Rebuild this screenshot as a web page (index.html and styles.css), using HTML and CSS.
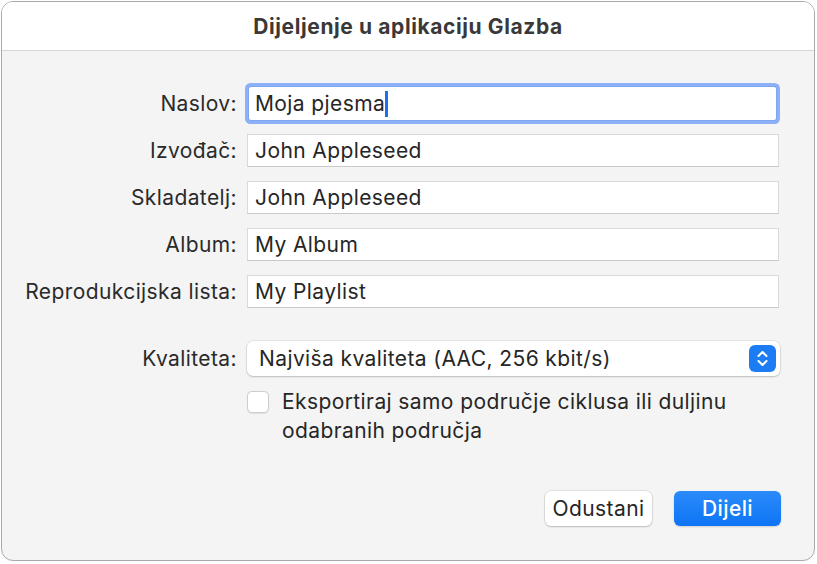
FILE: index.html
```html
<!DOCTYPE html>
<html lang="hr">
<head>
<meta charset="utf-8">
<title>Dijeljenje u aplikaciju Glazba</title>
<link rel="stylesheet" href="styles.css">
</head>
<body>
<div class="window">
  <div class="titlebar">Dijeljenje u aplikaciju Glazba</div>
  <div class="content">
    <div class="form">
      <label class="label">Naslov:</label>
      <div class="field focused"><span>Moja pjesma</span><span class="caret"></span></div>
      <label class="label">Izvođač:</label>
      <div class="field"><span>John Appleseed</span></div>
      <label class="label">Skladatelj:</label>
      <div class="field"><span>John Appleseed</span></div>
      <label class="label">Album:</label>
      <div class="field"><span>My Album</span></div>
      <label class="label">Reprodukcijska lista:</label>
      <div class="field"><span>My Playlist</span></div>
    </div>
    <div class="options">
      <label class="label">Kvaliteta:</label>
      <div class="popup">
        <span>Najviša kvaliteta (AAC, 256 kbit/s)</span>
        <span class="stepper">
          <svg width="27" height="27" viewBox="0 0 27 27">
            <rect x="0" y="0" width="27" height="27" rx="6" fill="#1c7cf4"/>
            <path d="M9.5 11 L13.5 7 L17.5 11" fill="none" stroke="#fff" stroke-width="2.1" stroke-linecap="round" stroke-linejoin="round"/>
            <path d="M9.5 16 L13.5 20 L17.5 16" fill="none" stroke="#fff" stroke-width="2.1" stroke-linecap="round" stroke-linejoin="round"/>
          </svg>
        </span>
      </div>
      <div class="empty"></div>
      <div class="check-row">
        <span class="checkbox"></span>
        <span class="check-text">Eksportiraj samo područje ciklusa ili duljinu odabranih područja</span>
      </div>
    </div>
    <div class="buttons">
      <button class="btn">Odustani</button>
      <button class="btn primary">Dijeli</button>
    </div>
  </div>
</div>
</body>
</html>
```
FILE: styles.css
```css
html, body {
  margin: 0;
  padding: 0;
  background: #ffffff;
}
body {
  font-family: Inter, "Noto Sans", "Liberation Sans", sans-serif;
  color: #262626;
}
.window {
  margin: 1px 0 0 1px;
  width: 814px;
  height: 560px;
  box-sizing: border-box;
  border: 1px solid #a9a9a9;
  border-radius: 12px;
  overflow: hidden;
  background: #f4f4f4;
  display: flex;
  flex-direction: column;
}
.titlebar {
  height: 48px;
  background: #ffffff;
  border-bottom: 1px solid #d6d6d6;
  display: flex;
  align-items: center;
  justify-content: center;
  font-size: 21px;
  font-weight: 700;
  color: #3a3838;
  letter-spacing: 0.6px;
}
.content {
  flex: 1;
  display: flex;
  flex-direction: column;
}
.form,
.options {
  display: grid;
  grid-template-columns: 235px 532px;
  column-gap: 10px;
}
.form {
  grid-auto-rows: 33px;
  row-gap: 14px;
  padding-top: 36px;
}
.options {
  margin-top: 33px;
  grid-template-rows: 35px auto;
  row-gap: 13px;
}
.label {
  justify-self: end;
  align-self: center;
  font-size: 21px;
  letter-spacing: 0.4px;
  color: #2a2a2a;
  white-space: nowrap;
}
.field {
  background: #ffffff;
  border: 1px solid #dadada;
  border-bottom-color: #c9c9c9;
  box-sizing: border-box;
  display: flex;
  align-items: center;
  padding-left: 7px;
  font-size: 21px;
  letter-spacing: 0.4px;
  color: #262626;
}
.field.focused {
  border: none;
  box-shadow: 0 0 0 1px #7fa6f2, 0 0 0 4px #8cb1f6;
  border-radius: 2px;
  margin: 0 3px 0 2px;
  padding-left: 6px;
}
.caret {
  display: inline-block;
  width: 2.5px;
  height: 26px;
  background: #1d6ff0;
  margin-left: 0;
}
.popup {
  height: 35px;
  width: 533px;
  background: #ffffff;
  border-radius: 6px;
  box-shadow: 0 0 0 0.5px rgba(0,0,0,0.12), 0 1px 2px rgba(0,0,0,0.18);
  display: flex;
  align-items: center;
  justify-content: space-between;
  padding: 0 4px 0 12px;
  box-sizing: border-box;
  font-size: 21px;
  letter-spacing: 0.4px;
  color: #262626;
}
.stepper {
  display: flex;
}
.check-row {
  display: flex;
  align-items: flex-start;
  gap: 13px;
  margin-top: -2px;
}
.checkbox {
  flex: none;
  width: 22px;
  height: 22px;
  margin-top: 4px;
  box-sizing: border-box;
  background: #ffffff;
  border: 1px solid #cdcdcd;
  border-radius: 5px;
  box-shadow: 0 0.5px 1px rgba(0,0,0,0.08);
}
.check-text {
  font-size: 21px;
  letter-spacing: 0.4px;
  line-height: 29px;
  color: #262626;
  width: 497px;
}
.buttons {
  margin-top: auto;
  display: flex;
  justify-content: flex-end;
  gap: 22px;
  padding: 0 33px 34px 0;
}
.btn {
  font-family: Inter, "Noto Sans", "Liberation Sans", sans-serif;
  font-size: 21px;
  letter-spacing: 0.4px;
  height: 35px;
  width: 107px;
  border: none;
  border-radius: 6px;
  background: #ffffff;
  color: #262626;
  box-shadow: 0 0 0 0.5px rgba(0,0,0,0.14), 0 1px 2px rgba(0,0,0,0.18);
  padding: 0;
}
.btn.primary {
  background: linear-gradient(#2b8bfa, #0d74f4);
  color: #ffffff;
  font-weight: 500;
  box-shadow: 0 1px 2px rgba(0,0,0,0.15);
}
```
